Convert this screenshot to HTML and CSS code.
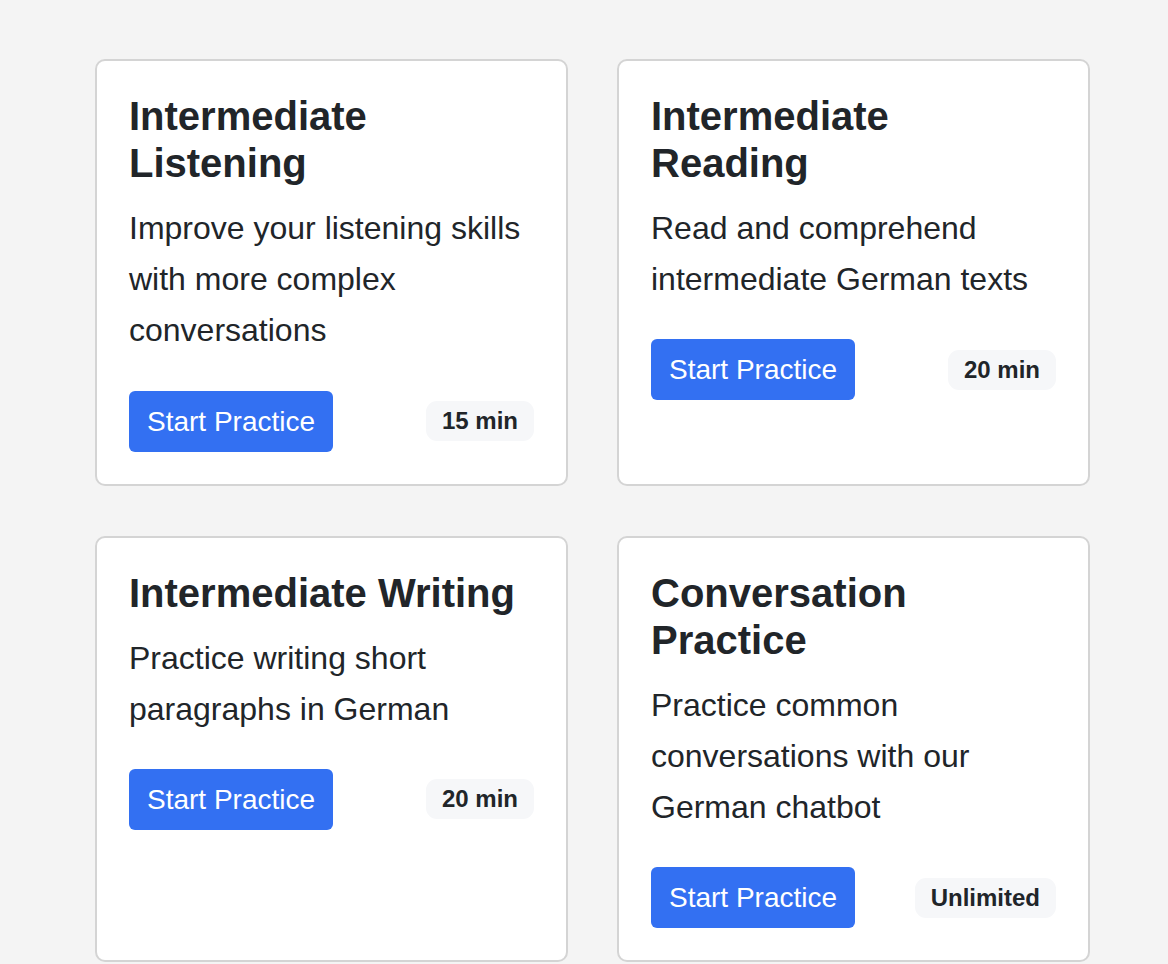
FILE: index.html
```html
<!DOCTYPE html>
<html lang="en">
<head>
<meta charset="utf-8">
<title>Practice</title>
<link rel="stylesheet" href="styles.css">
</head>
<body>
<main class="grid">
  <section class="card">
    <h2 class="card-title">Intermediate Listening</h2>
    <p class="card-text">Improve your listening skills with more complex conversations</p>
    <div class="card-footer">
      <button class="btn">Start Practice</button>
      <span class="badge">15 min</span>
    </div>
  </section>
  <section class="card">
    <h2 class="card-title">Intermediate Reading</h2>
    <p class="card-text">Read and comprehend intermediate German texts</p>
    <div class="card-footer">
      <button class="btn">Start Practice</button>
      <span class="badge">20 min</span>
    </div>
  </section>
  <section class="card">
    <h2 class="card-title">Intermediate Writing</h2>
    <p class="card-text">Practice writing short paragraphs in German</p>
    <div class="card-footer">
      <button class="btn">Start Practice</button>
      <span class="badge">20 min</span>
    </div>
  </section>
  <section class="card">
    <h2 class="card-title">Conversation Practice</h2>
    <p class="card-text">Practice common conversations with our German chatbot</p>
    <div class="card-footer">
      <button class="btn">Start Practice</button>
      <span class="badge">Unlimited</span>
    </div>
  </section>
</main>
</body>
</html>
```

FILE: styles.css
```css
* { box-sizing: border-box; }

html, body {
  margin: 0;
  background: #f4f4f4;
}

body {
  font-family: "Liberation Sans", Arial, Helvetica, sans-serif;
  color: #212529;
  padding: 59px 0 0 95px;
}

.grid {
  display: grid;
  grid-template-columns: repeat(2, 473px);
  column-gap: 49px;
  row-gap: 50px;
}

.card {
  background: #ffffff;
  border: 2px solid #d4d4d4;
  border-radius: 10px;
  padding: 32px;
}

.card-title {
  margin: 0;
  font-size: 40px;
  line-height: 47px;
  font-weight: 700;
  color: #212529;
}

.card-text {
  margin: 16px 0 0;
  font-size: 32px;
  line-height: 1.6;
  color: #212529;
}

.card-footer {
  margin-top: 34px;
  display: flex;
  justify-content: space-between;
  align-items: center;
}

.btn {
  font-family: inherit;
  font-size: 28px;
  line-height: 33px;
  padding: 14px 18px;
  background: #3370f2;
  color: #ffffff;
  border: none;
  border-radius: 6px;
  cursor: pointer;
}

.badge {
  font-size: 24px;
  line-height: 28px;
  font-weight: 700;
  padding: 6px 16px;
  background: #f6f7f9;
  border-radius: 11px;
  color: #212529;
}
```
